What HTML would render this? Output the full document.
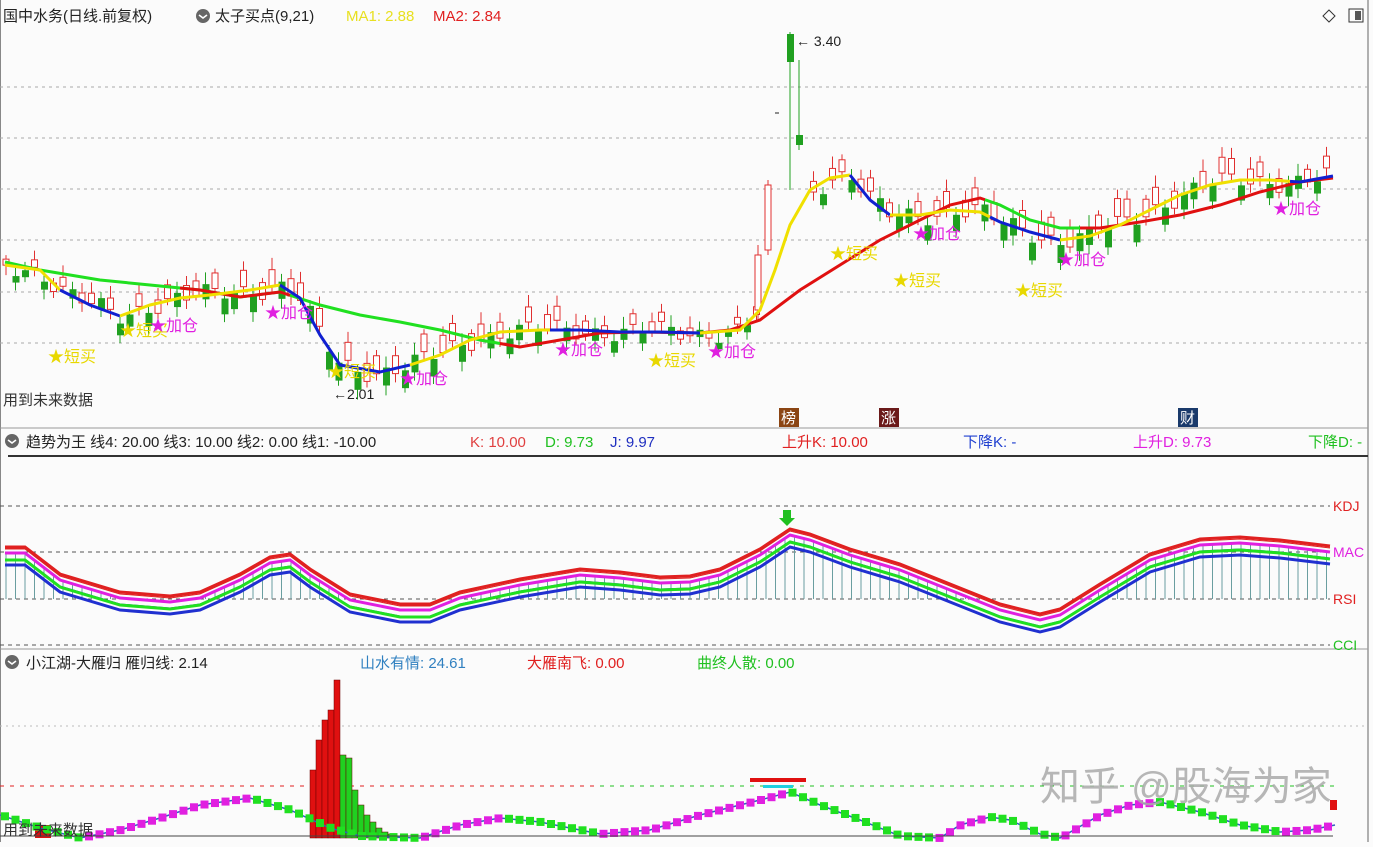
<!DOCTYPE html>
<html><head><meta charset="utf-8"><style>
body{margin:0;width:1373px;height:842px;overflow:hidden;background:#fbfbfb;font-family:"Liberation Sans","Noto Sans CJK SC",sans-serif}
svg text{font-family:"Liberation Sans","Noto Sans CJK SC",sans-serif}
</style></head><body>
<svg id="s" width="1373" height="842" xmlns="http://www.w3.org/2000/svg">
<rect width="1373" height="842" fill="#fbfbfb"/>
<line x1="1368" y1="0" x2="1368" y2="842" stroke="#666" />
<line x1="0.5" y1="0" x2="0.5" y2="842" stroke="#888"/>
<g stroke="#aaa" stroke-dasharray="3,4">
<line x1="0" y1="87" x2="1368" y2="87"/><line x1="0" y1="138" x2="1368" y2="138"/><line x1="0" y1="189" x2="1368" y2="189"/><line x1="0" y1="240" x2="1368" y2="240"/><line x1="0" y1="292" x2="1368" y2="292"/><line x1="0" y1="343" x2="1368" y2="343"/>
</g>
<g stroke="#555" stroke-dasharray="4,4">
<line x1="0" y1="506" x2="1330" y2="506"/><line x1="0" y1="552" x2="1330" y2="552"/><line x1="0" y1="599" x2="1330" y2="599"/><line x1="0" y1="645" x2="1330" y2="645"/>
</g>
<g stroke="#bbb" stroke-dasharray="2,4"><line x1="0" y1="726" x2="1368" y2="726"/></g>
<g stroke-dasharray="4,6"><line x1="0" y1="786" x2="600" y2="786" stroke="#e02020"/><line x1="600" y1="786" x2="1340" y2="786" stroke="#20c020"/></g>
<line x1="0" y1="428" x2="1368" y2="428" stroke="#999"/>
<line x1="8" y1="456" x2="1368" y2="456" stroke="#333" stroke-width="2"/>
<line x1="0" y1="649" x2="1368" y2="649" stroke="#999"/>
<g id="g"></g>
<!-- headers -->
<text x="3" y="21" font-size="15" fill="#222">国中水务(日线.前复权)</text>
<circle cx="203" cy="16" r="7" fill="#666"/><path d="M199 15l4 3 4-3" stroke="#fff" stroke-width="1.6" fill="none"/>
<text x="215" y="21" font-size="15" fill="#222">太子买点(9,21)</text>
<text x="346" y="21" font-size="15" fill="#e8e020">MA1: 2.88</text>
<text x="433" y="21" font-size="15" fill="#e02020">MA2: 2.84</text>
<path d="M1329 10l6 6-6 6-6-6z" fill="none" stroke="#333"/>
<rect x="1349" y="9" width="14" height="13" fill="none" stroke="#333"/><rect x="1355" y="11" width="6" height="9" fill="#555"/>
<circle cx="12" cy="441" r="7" fill="#666"/><path d="M8 440l4 3 4-3" stroke="#fff" stroke-width="1.6" fill="none"/>
<text x="26" y="447" font-size="15" fill="#222">趋势为王 线4: 20.00 线3: 10.00 线2: 0.00 线1: -10.00</text>
<text x="470" y="447" font-size="15" fill="#e04040">K: 10.00</text>
<text x="545" y="447" font-size="15" fill="#20c020">D: 9.73</text>
<text x="610" y="447" font-size="15" fill="#2030c0">J: 9.97</text>
<text x="782" y="447" font-size="15" fill="#e02020">上升K: 10.00</text>
<text x="963" y="447" font-size="15" fill="#2040d0">下降K: -</text>
<text x="1133" y="447" font-size="15" fill="#e020e0">上升D: 9.73</text>
<text x="1308" y="447" font-size="15" fill="#20c020">下降D: -</text>
<text x="1333" y="511" font-size="14" fill="#e02020">KDJ</text>
<text x="1333" y="557" font-size="14" fill="#e020e0">MAC</text>
<text x="1333" y="604" font-size="14" fill="#e02020">RSI</text>
<text x="1333" y="650" font-size="14" fill="#20c020">CCI</text>
<circle cx="12" cy="662" r="7" fill="#666"/><path d="M8 661l4 3 4-3" stroke="#fff" stroke-width="1.6" fill="none"/>
<text x="26" y="668" font-size="15" fill="#222">小江湖-大雁归 雁归线: 2.14</text>
<text x="360" y="668" font-size="15" fill="#3080c0">山水有情: 24.61</text>
<text x="527" y="668" font-size="15" fill="#e02020">大雁南飞: 0.00</text>
<text x="697" y="668" font-size="15" fill="#20c020">曲终人散: 0.00</text>
<text x="3" y="405" font-size="15" fill="#333">用到未来数据</text>
<text x="3" y="835" font-size="15" fill="#333">用到未来数据</text>
<rect x="779" y="408" width="20" height="19" fill="#8b4513"/><text x="781" y="423" font-size="15" fill="#fff">榜</text>
<rect x="879" y="408" width="20" height="19" fill="#6b1a1a"/><text x="881" y="423" font-size="15" fill="#fff">涨</text>
<rect x="1178" y="408" width="20" height="19" fill="#1a3a6b"/><text x="1180" y="423" font-size="15" fill="#fff">财</text>
<text x="796" y="46" font-size="14" fill="#222">← 3.40</text>
<text x="333" y="399" font-size="14" fill="#222">←2.01</text>
<text x="1040" y="800" font-size="40" fill="#aaa" opacity="0.85">知乎 @股海为家</text>
</svg>
<script>
const g=document.getElementById('g');let h='';
function pl(p,c,w){h+=`<polyline points="${p}" fill="none" stroke="${c}" stroke-width="${w}"/>`;}
function pts(a){return a.map(v=>v.join(',')).join(' ');}
function interp(arr,x){for(let i=0;i<arr.length-1;i++){if(x>=arr[i][0]&&x<=arr[i+1][0]){const t=(x-arr[i][0])/(arr[i+1][0]-arr[i][0]);return arr[i][1]+t*(arr[i+1][1]-arr[i][1]);}}return arr[arr.length-1][1];}
const Y=[[5,265],[40,270],[60,290],[90,305],[120,316],[150,305],[180,298],[210,295],[250,290],[280,285],[300,298],[320,335],[340,365],[380,372],[410,365],[440,355],[470,340],[500,332],[540,330],[580,330],[620,332],[660,332],[700,333],[740,330],[760,310],[775,270],[790,225],[810,190],[830,178],[850,175],[870,200],[890,215],[920,215],[950,210],[980,212],[1000,222],[1030,232],[1060,240],[1090,236],[1120,225],[1150,210],[1180,195],[1210,185],[1240,180],[1270,180],[1300,182],[1333,176]];
const M=[[5,262],[40,270],[100,280],[150,285],[200,290],[240,297],[280,292],[320,305],[360,315],[400,322],[440,330],[480,340],[520,347],[560,340],[600,333],[640,332],[700,333],[730,330],[760,320],[800,290],[840,265],[880,240],[920,220],[950,205],[980,198],[1000,205],[1030,220],[1060,228],[1100,228],[1140,222],[1180,215],[1220,205],[1260,192],[1300,182],[1333,178]];
// candles
for(let i=0;i<140;i++){const x=6+i*9.5;let base=interp(Y,x);let r=Math.sin(i*1.7)*12+Math.sin(i*0.53)*8;let up=Math.sin(i*2.3+1)>-0.1;let o=base+r*0.6,c=base+r*0.6+(up?-1:1)*(6+Math.abs(Math.sin(i*3.1))*12);
let top=Math.min(o,c)-4-Math.abs(Math.sin(i*5))*8,bot=Math.max(o,c)+4+Math.abs(Math.cos(i*4))*6;
if(x>760&&x<810)continue;
const col=up?'#e03030':'#20a020';h+=`<line x1="${x}" y1="${top}" x2="${x}" y2="${bot}" stroke="${col}"/>`;
h+=up?`<rect x="${x-3}" y="${Math.min(o,c)}" width="6" height="${Math.abs(c-o)}" fill="#fff" stroke="${col}"/>`:`<rect x="${x-3}" y="${Math.min(o,c)}" width="7" height="${Math.abs(c-o)}" fill="${col}"/>`;}
h+=`<line x1="758" y1="245" x2="758" y2="320" stroke="#e03030"/><rect x="755" y="255" width="6" height="55" fill="#fff" stroke="#e03030"/>`;
h+=`<line x1="768" y1="180" x2="768" y2="255" stroke="#e03030"/><rect x="765" y="185" width="6" height="65" fill="#fff" stroke="#e03030"/>`;
h+=`<line x1="790" y1="32" x2="790" y2="190" stroke="#20a020"/><rect x="787" y="34" width="7" height="28" fill="#20a020"/>`;
h+=`<line x1="799" y1="60" x2="799" y2="150" stroke="#20a020"/><rect x="796" y="135" width="7" height="10" fill="#20a020"/>`;
h+=`<line x1="775" y1="113" x2="779" y2="113" stroke="#222"/>`;
// MA2 colored
function seg(A,x0,x1,c,w){pl(pts(A.filter(p=>p[0]>=x0&&p[0]<=x1).concat([]).length?[[x0,interp(A,x0)]].concat(A.filter(p=>p[0]>x0&&p[0]<x1)).concat([[x1,interp(A,x1)]]):[]),c,w);}
seg(M,5,500,'#20e020',3);seg(M,180,290,'#e01010',3);seg(M,500,730,'#e01010',3);seg(M,730,985,'#e01010',3);seg(M,985,1080,'#20e020',3);seg(M,1080,1333,'#e01010',3);
seg(Y,5,60,'#f0e000',3);seg(Y,60,120,'#1020d0',3);seg(Y,120,280,'#f0e000',3);seg(Y,280,410,'#1020d0',3);seg(Y,410,550,'#f0e000',3);seg(Y,550,700,'#1020d0',3);seg(Y,700,850,'#f0e000',3);seg(Y,850,890,'#1020d0',3);seg(Y,890,990,'#f0e000',3);seg(Y,990,1060,'#1020d0',3);seg(Y,1060,1290,'#f0e000',3);seg(Y,1290,1333,'#1020d0',3);
// annotations
[[48,362],[120,336],[328,377],[648,366],[893,286],[1015,296],[830,259]].forEach(p=>h+=`<text x="${p[0]}" y="${p[1]}" font-size="16" fill="#e8d800">★短买</text>`);
[[150,331],[265,318],[400,384],[555,355],[708,357],[913,239],[1058,265],[1273,214]].forEach(p=>h+=`<text x="${p[0]}" y="${p[1]}" font-size="16" fill="#e020e0">★加仓</text>`);
// oscillator
const O=[[5,553],[25,553],[60,580],[120,598],[170,602],[200,598],[240,580],[270,563],[290,560],[310,575],[350,600],[400,610],[430,610],[460,598],[520,585],[580,575],[620,578],[660,583],[690,582],[720,575],[760,555],[790,535],[810,540],[850,555],[900,570],[950,590],[1000,610],[1040,620],[1060,615],[1100,590],[1150,560],[1200,545],[1240,543],[1280,546],[1330,552]];
for(let x=6;x<1330;x+=9.5){const y=interp(O,x);if(y<597)h+=`<line x1="${x}" y1="599" x2="${x}" y2="${y}" stroke="#6a9ea0"/>`;}
function off(d){return pts(O.map(p=>[p[0],p[1]+d]));}
pl(off(-4),'#e02020',1);pl(off(6),'#2030d0',1);pl(off(12),'#2030d0',3);pl(off(7),'#20e020',3);pl(off(0),'#e020e0',3);pl(off(-6),'#e02020',3);
h+=`<path d="M783 510h8v8h4l-8 8-8-8h4z" fill="#20c020"/>`;
// histogram
const hb=[[310,770],[316,740],[322,720],[328,710],[334,680],[340,755],[346,758],[352,790],[358,805],[364,815],[370,822],[376,828],[382,832],[388,834]];
hb.forEach((b,i)=>h+=`<rect x="${b[0]}" y="${b[1]}" width="6" height="${838-b[1]}" fill="${i<5?'#e01010':'#20d020'}" stroke="#600" stroke-width="0.5"/>`);
h+=`<rect x="35" y="825" width="16" height="13" fill="#e01010"/>`;
const W=[[0,815],[40,828],[80,838],[120,830],[160,818],[200,805],[250,798],[290,810],[330,828],[360,836],[420,838],[460,825],[500,818],[540,822],[580,830],[600,834],[650,830],[700,815],[760,800],[790,792],[820,805],[860,820],[900,836],[940,838],[960,825],[990,817],[1010,820],[1040,834],[1060,838],[1100,815],[1130,805],[1160,802],[1200,812],[1240,825],[1280,832],[1310,830],[1335,825]];
pl(pts(W),'#3060c0',1.5);
for(let x=4;x<1335;x+=10.5){const y=interp(W,x);const n=interp(W,x+5);h+=`<rect x="${x-3}" y="${y-4}" width="8" height="8" fill="${n>y?'#20e020':'#e020e0'}"/>`;}
h+=`<rect x="750" y="778" width="56" height="4" fill="#e01010"/><rect x="763" y="785" width="30" height="3" fill="#20d0e0"/>`;
h+=`<rect x="1330" y="800" width="7" height="10" fill="#e01010"/>`;
h+=`<line x1="0" y1="836" x2="1333" y2="836" stroke="#444"/>`;
g.innerHTML=h;
</script>
</body></html>
